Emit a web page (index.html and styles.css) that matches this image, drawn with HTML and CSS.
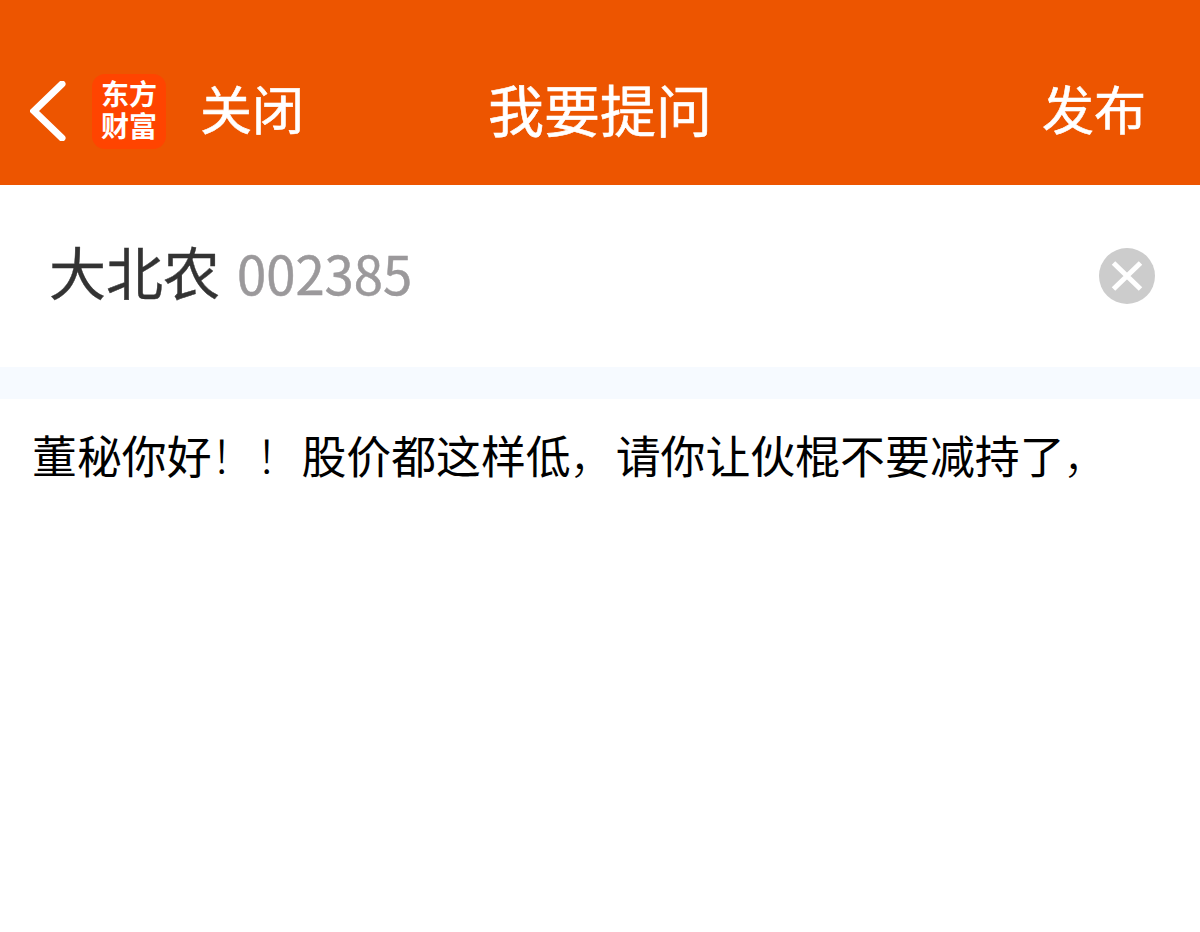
FILE: index.html
```
<!DOCTYPE html>
<html lang="zh-CN">
<head>
  <meta charset="UTF-8">
  <meta name="viewport" content="width=device-width, initial-scale=1.0">
  <title>我要提问</title>
  <link rel="stylesheet" href="styles.css">
</head>
<body>
  <header class="navbar">
    <div class="nav-left">
      <svg class="back" viewBox="0 0 36 60" width="36" height="60">
        <path d="M32 3 L4 30 L32 57" />
      </svg>
      <div class="logo">东方财富</div>
      <span class="close">关闭</span>
    </div>
    <h1>我要提问</h1>
    <span class="publish">发布</span>
  </header>

  <!-- Selected stock -->
  <section class="stock">
    <span class="stock-name">大北农</span>
    <span class="stock-code">002385</span>
    <svg class="clear" viewBox="0 0 56 56" width="56" height="56">
      <circle cx="28" cy="28" r="28" />
      <path d="M14.5 15 L41.5 41 M41.5 15 L14.5 41" />
    </svg>
  </section>

  <!-- Question text -->
  <main class="question">董秘你好<span class="mark">！！</span>股价都这样低<span class="mark">，</span>请你让伙棍不要减持了<span class="mark">，</span></main>
</body>
</html>
```
FILE: styles.css
```
body {
  margin: 0;
  background: #fff;
  font-family: "Noto Sans CJK SC", sans-serif;
  color: #000;
}
.navbar {
  display: grid;
  grid-template-columns: 1fr auto 1fr;
  align-items: center;
  box-sizing: border-box;
  height: 185px;
  padding: 37px 54px 0;
  background: #ed5500;
  color: #fff;
}
.nav-left {
  display: flex;
  align-items: center;
  margin-left: -24px;
}
.back {
  fill: none;
  stroke: #fff;
  stroke-width: 7;
  stroke-linecap: round;
}
.logo {
  box-sizing: border-box;
  width: 74px;
  height: 75px;
  margin: 0 34px 0 26px;
  padding: 3px 9px;
  border-radius: 13px;
  background: #ff4400;
  font-size: 28px;
  font-weight: 700;
  line-height: 32px;
  word-break: break-all;
}
.navbar h1 {
  margin: 0;
  padding-bottom: 7px;
  font-size: 56px;
  font-weight: 400;
  line-height: 80px;
  -webkit-text-stroke: 0.6px #fff;
}
.close,
.publish {
  padding-bottom: 6px;
  font-size: 52px;
  line-height: 76px;
  -webkit-text-stroke: 0.6px #fff;
}
.publish {
  justify-self: end;
}
.stock {
  display: flex;
  align-items: center;
  box-sizing: border-box;
  height: 214px;
  padding: 0 45px 0 49px;
  border-bottom: 32px solid #f6faff;
}
.stock-name {
  padding-bottom: 13px;
  font-size: 57px;
  color: #333;
  -webkit-text-stroke: 0.4px #333;
}
.stock-code {
  margin-left: 17px;
  padding-bottom: 8px;
  font-size: 52.6px;
  color: #9b999b;
  -webkit-text-stroke: 0.5px #9b999b;
}
.clear {
  margin-left: auto;
}
.clear circle {
  fill: #ccc;
}
.clear path {
  stroke: #fff;
  stroke-width: 5;
}
.question {
  padding: 23px 32px;
  font-size: 44.9px;
  line-height: 66px;
}
.mark {
  position: relative;
  left: -1px;
  font-weight: 300;
}
```
